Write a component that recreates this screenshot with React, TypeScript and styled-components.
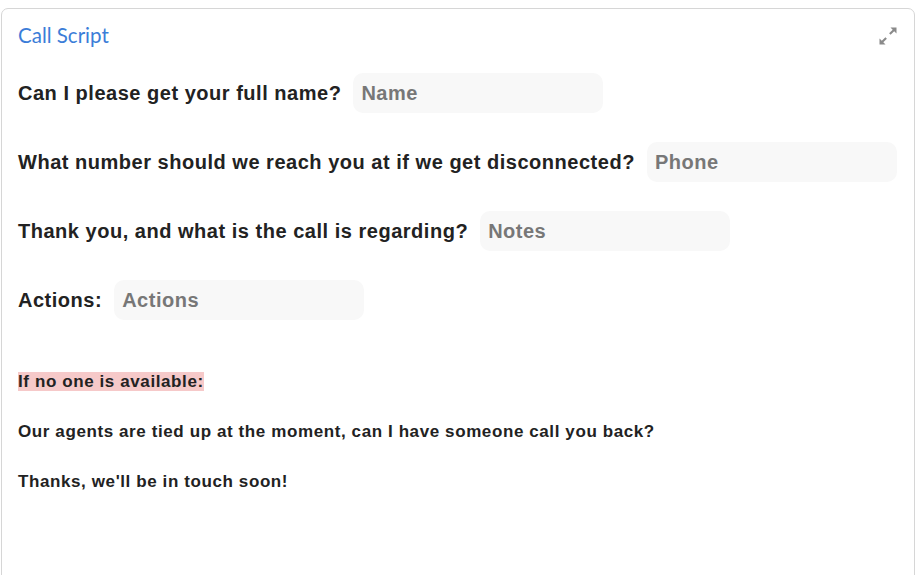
import styled, { createGlobalStyle } from "styled-components";

const Global = createGlobalStyle`
    body {
        margin: 0;
        background: #fff;
        font-family: "Liberation Sans", Arial, sans-serif;
    }
`

const Card = styled.section`
    margin: 8px 2px 0 1px;
    height: 580px;
    border: 1px solid #d6d6d6;
    border-radius: 7px;
    padding: 16px 17px 0 16px;
    box-sizing: border-box;
`

const Header = styled.div`
    display: flex;
    align-items: center;
    justify-content: space-between;
    height: 22px;
    margin-bottom: 26px;
`

const Titulo = styled.h2`
    margin: 0;
    font-family: Lato, "Liberation Sans", sans-serif;
    font-weight: 400;
    font-size: 20.5px;
    color: #3b7dd8;
    position: relative;
    top: -1px;
`

const ExpandButton = styled.button`
    border: none;
    background: none;
    padding: 0;
    margin-right: -1px;
    display: flex;
    color: #8a8a8a;
`

const Linha = styled.div`
    display: flex;
    align-items: center;
    gap: 12px;
    height: 40px;
    margin-bottom: 29px;
`

const Pergunta = styled.label`
    font-size: 20px;
    font-weight: 700;
    letter-spacing: 0.52px;
    color: #222;
    white-space: nowrap;
`

const Campo = styled.input`
    width: 250px;
    height: 40px;
    box-sizing: border-box;
    border: none;
    border-radius: 10px;
    background: #f8f8f8;
    padding: 0 8px;
    font-family: "Liberation Sans", Arial, sans-serif;
    font-size: 20px;
    font-weight: 700;
    letter-spacing: 0.5px;
    outline: none;

    &::placeholder {
        color: #777;
    }
`

const Roteiro = styled.div`
    margin-top: 52px;
    display: flex;
    flex-direction: column;
    gap: 31px;
`

const Fala = styled.p<{ $destaque?: boolean }>`
    margin: 0;
    font-size: 17px;
    font-weight: 700;
    letter-spacing: 0.6px;
    line-height: 19px;
    color: #222;

    span {
        background: ${p => (p.$destaque ? "#f6c9c9" : "transparent")};
    }
`

const perguntas = [
    { texto: "Can I please get your full name?", campo: "Name" },
    { texto: "What number should we reach you at if we get disconnected?", campo: "Phone" },
    { texto: "Thank you, and what is the call is regarding?", campo: "Notes" },
    { texto: "Actions:", campo: "Actions" },
]

function ExpandIcon() {
    return (
        <svg width="20" height="20" viewBox="0 0 20 20" fill="currentColor">
            <path d="M12.5 1.5h6v6l-2.3-2.3-3.6 3.6-1.5-1.5 3.6-3.6z" />
            <path d="M7.5 18.5h-6v-6l2.3 2.3 3.6-3.6 1.5 1.5-3.6 3.6z" />
        </svg>
    )
}

export default function App() {
    return (
        <>
            <Global />
            <Card>
                <Header>
                    <Titulo>Call Script</Titulo>
                    <ExpandButton aria-label="Expand">
                        <ExpandIcon />
                    </ExpandButton>
                </Header>

                {perguntas.map(p => (
                    <Linha key={p.campo}>
                        <Pergunta>{p.texto}</Pergunta>
                        <Campo type="text" placeholder={p.campo} />
                    </Linha>
                ))}

                <Roteiro>
                    <Fala $destaque><span>If no one is available:</span></Fala>
                    <Fala>Our agents are tied up at the moment, can I have someone call you back?</Fala>
                    <Fala>Thanks, we'll be in touch soon!</Fala>
                </Roteiro>
            </Card>
        </>
    )
}
